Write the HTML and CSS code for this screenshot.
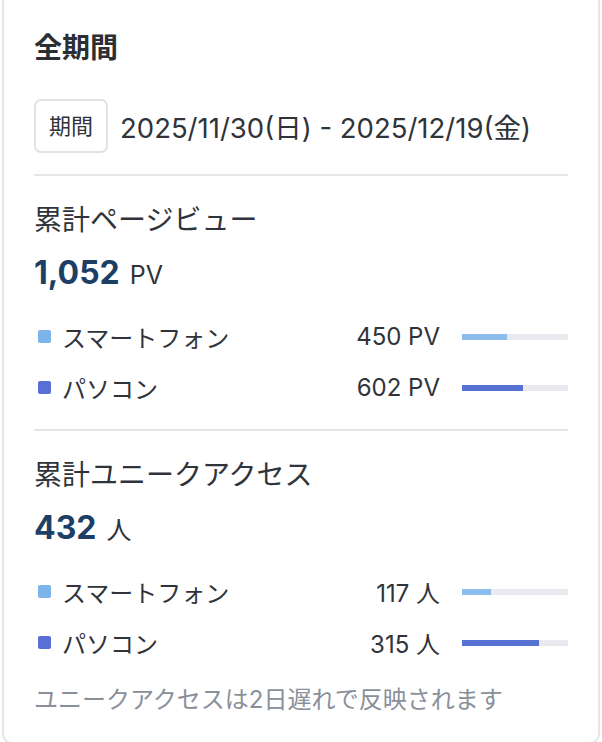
FILE: index.html
```html
<!DOCTYPE html>
<html lang="ja">
<head>
  <meta charset="UTF-8">
  <meta name="viewport" content="width=device-width, initial-scale=1.0">
  <title>アクセス集計</title>
  <link rel="stylesheet" href="styles.css">
</head>
<body>

  <div class="card">
    <h2 class="card-title">全期間</h2>

    <div class="period">
      <span class="period-label">期間</span>
      <span class="period-range">2025/11/30(日) - 2025/12/19(金)</span>
    </div>

    <section class="stat">
      <h3 class="stat-title">累計ページビュー</h3>
      <div class="stat-total"><strong>1,052</strong><span class="unit">PV</span></div>
      <ul class="breakdown">
        <li class="breakdown-row">
          <span class="marker sp"></span>
          <span class="label">スマートフォン</span>
          <span class="value">450 PV</span>
          <span class="bar"><span class="bar-fill sp" style="width: 42.8%"></span></span>
        </li>
        <li class="breakdown-row">
          <span class="marker pc"></span>
          <span class="label">パソコン</span>
          <span class="value">602 PV</span>
          <span class="bar"><span class="bar-fill pc" style="width: 57.2%"></span></span>
        </li>
      </ul>
    </section>

    <section class="stat">
      <h3 class="stat-title">累計ユニークアクセス</h3>
      <div class="stat-total"><strong>432</strong><span class="unit">人</span></div>
      <ul class="breakdown">
        <li class="breakdown-row">
          <span class="marker sp"></span>
          <span class="label">スマートフォン</span>
          <span class="value">117 人</span>
          <span class="bar"><span class="bar-fill sp" style="width: 27.1%"></span></span>
        </li>
        <li class="breakdown-row">
          <span class="marker pc"></span>
          <span class="label">パソコン</span>
          <span class="value">315 人</span>
          <span class="bar"><span class="bar-fill pc" style="width: 72.9%"></span></span>
        </li>
      </ul>
    </section>

    <p class="note">ユニークアクセスは2日遅れで反映されます</p>
  </div>

</body>
</html>
```

FILE: styles.css
```css
body {
  font-family: Inter, "Noto Sans CJK JP", sans-serif;
  background-color: #ffffff;
  color: #30343a;
  margin: 0;
  padding: 0;
}
.card {
  margin: -8px 2px 0 2px;
  padding: 34px 30px 26px 30px;
  border: 2px solid #e3e5e9;
  border-radius: 10px;
  background-color: #ffffff;
}
.card-title {
  margin: 0;
  height: 40px;
  font-size: 28px;
  font-weight: 700;
  line-height: 40px;
  color: #2b2f34;
}
.period {
  display: flex;
  align-items: center;
  gap: 12px;
  height: 54px;
  margin-top: 31px;
}
.period-label {
  border: 2px solid #e0e2e6;
  border-radius: 7px;
  padding: 0 13px;
  font-size: 22px;
  line-height: 50px;
}
.period-range {
  font-size: 27.5px;
}
.stat {
  margin-top: 21px;
  padding-top: 24px;
  border-top: 2px solid #e4e6ea;
}
.stat + .stat {
  margin-top: 0;
}
.stat-title {
  margin: 0;
  height: 40px;
  font-size: 28px;
  font-weight: 400;
  line-height: 40px;
}
.stat-total {
  display: flex;
  align-items: baseline;
  height: 45px;
  margin-top: 10px;
  line-height: 45px;
}
.stat-total strong {
  font-size: 32px;
  font-weight: 700;
  color: #1d3f66;
}
.unit {
  margin-left: 10px;
  font-size: 25px;
}
.breakdown {
  list-style: none;
  margin: 16px 0;
  padding: 0;
}
.breakdown-row {
  display: flex;
  align-items: center;
  height: 51px;
  font-size: 24px;
}
.marker {
  flex: none;
  width: 13px;
  height: 13px;
  margin: 0 11px 0 4px;
  border-radius: 2px;
}
.marker.sp {
  background-color: #7db4ea;
}
.marker.pc {
  background-color: #5a6fd5;
}
.bar-fill.sp {
  background-color: #8bbcec;
}
.bar-fill.pc {
  background-color: #5673d4;
}
.label {
  flex: 1;
}
.value {
  text-align: right;
}
.bar {
  flex: none;
  display: flex;
  width: 106px;
  height: 6px;
  margin-left: 22px;
  background-color: #e9eaef;
}
.bar-fill {
  height: 100%;
}
.note {
  margin: 5px 0 0 0;
  height: 32px;
  font-size: 24px;
  line-height: 32px;
  color: #8a9099;
}
```
